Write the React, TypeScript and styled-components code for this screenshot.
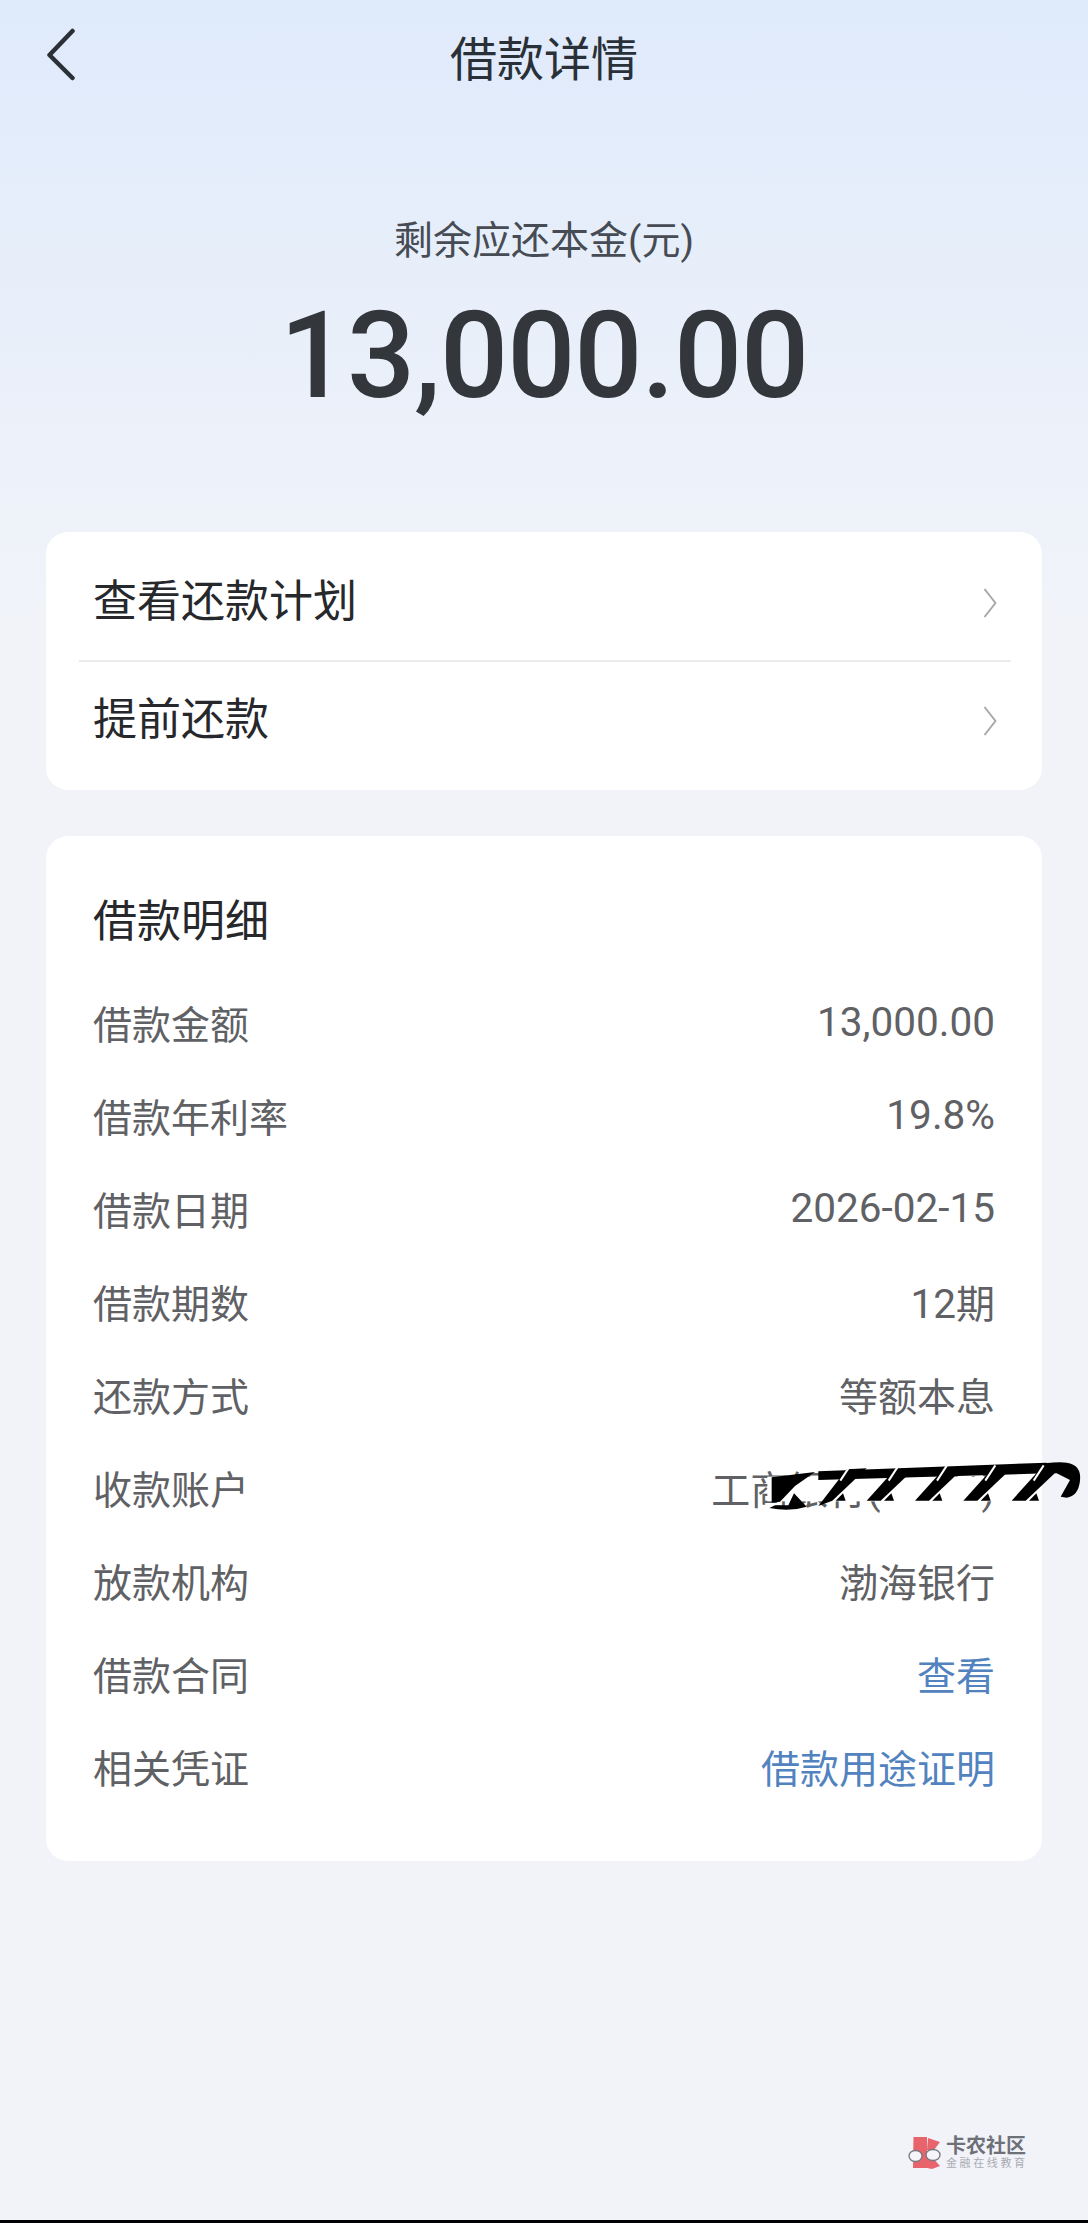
import * as React from "react";
import styled, { createGlobalStyle } from "styled-components";

const GlobalStyle = createGlobalStyle`
  html, body {
    margin: 0;
    padding: 0;
    background: #f1f3f9;
  }
`;

const FONT = `Roboto, "Noto Sans CJK SC", sans-serif`;

const Page = styled.div`
  position: relative;
  width: 1088px;
  height: 2223px;
  overflow: hidden;
  display: flex;
  flex-direction: column;
  font-family: ${FONT};
  background: linear-gradient(180deg, #dfeafb 0, #e8effa 300px, #f1f3f9 620px, #f1f3f9 100%);
`;

const Header = styled.div`
  height: 111px;
  display: flex;
  align-items: center;
  justify-content: center;
  position: relative;
`;

const BackButton = styled.div`
  position: absolute;
  left: 44px;
  top: 28px;
  width: 32px;
  height: 54px;
`;

const Title = styled.div`
  font-size: 47px;
  color: #2a3038;
  font-weight: 400;
`;

const Summary = styled.div`
  margin-top: 105px;
  display: flex;
  flex-direction: column;
  align-items: center;
`;

const SummaryLabel = styled.div`
  font-size: 39px;
  line-height: 50px;
  color: #474c54;
`;

const SummaryAmount = styled.div`
  margin-top: 20px;
  font-size: 120px;
  line-height: 140px;
  font-weight: 500;
  color: #33363b;
  letter-spacing: -1px;
`;

const Card = styled.div`
  margin: 0 46px;
  background: #ffffff;
  border-radius: 22px;
  box-sizing: border-box;
`;

const ActionCard = styled(Card)`
  margin-top: 106px;
  height: 258px;
  padding: 0 31px 0 33px;
`;

const ActionRow = styled.div<{ $first?: boolean }>`
  box-sizing: border-box;
  display: flex;
  align-items: center;
  justify-content: space-between;
  font-size: 44px;
  color: #26282c;
  height: ${({ $first }) => ($first ? "130px" : "128px")};
  padding: ${({ $first }) => ($first ? "4px 14px 0 14px" : "0 14px 20px 14px")};
  ${({ $first }) => $first && "border-bottom: 2px solid #ececef;"}
`;

const ChevronIcon = styled.svg`
  width: 14px;
  height: 30px;
  margin-top: 10px;
`;

const DetailCard = styled(Card)`
  margin-top: 46px;
  height: 1025px;
  padding: 56px 47px 0 47px;
  position: relative;
`;

const DetailTitle = styled.div`
  font-size: 44px;
  line-height: 60px;
  color: #26282c;
  margin-bottom: 23px;
`;

const DetailRow = styled.div`
  height: 93px;
  display: flex;
  align-items: center;
  justify-content: space-between;
  font-size: 39px;
  color: #5f6165;
`;

const RowLabel = styled.span``;

const RowValue = styled.span<{ $link?: boolean }>`
  color: ${({ $link }) => ($link ? "#5283bf" : "#5f6165")};
`;

const Num = styled.span`
  font-size: 40.5px;
`;

const Scribble = styled.svg`
  position: absolute;
  left: 634px;
  top: 594px;
  width: 408px;
  height: 130px;
  overflow: visible;
`;

const Watermark = styled.div`
  position: absolute;
  left: 908px;
  top: 2135px;
  display: flex;
  align-items: center;
  gap: 1px;
`;

const WatermarkText = styled.div`
  display: flex;
  flex-direction: column;
  width: 80px;
`;

const WatermarkName = styled.div`
  font-size: 20px;
  line-height: 22px;
  font-weight: 700;
  color: #6e7078;
`;

const WatermarkSlogan = styled.div`
  font-size: 11px;
  line-height: 13px;
  letter-spacing: 2.6px;
  white-space: nowrap;
  color: #a9abb2;
`;

const BottomBar = styled.div`
  margin-top: auto;
  height: 3px;
  background: #000;
`;

const Chevron = () => (
  <ChevronIcon viewBox="0 0 14 30" fill="none">
    <path d="M1.5 1 L12.5 15 L1.5 29" stroke="#a8a8ac" strokeWidth="2" strokeLinejoin="round" />
  </ChevronIcon>
);

const details: { label: string; value: React.ReactNode; link?: boolean }[] = [
  { label: "借款金额", value: <Num>13,000.00</Num> },
  { label: "借款年利率", value: <Num>19.8%</Num> },
  { label: "借款日期", value: <Num>2026-02-15</Num> },
  { label: "借款期数", value: <><Num>12</Num>期</> },
  { label: "还款方式", value: "等额本息" },
  { label: "收款账户", value: "工商银行(******)" },
  { label: "放款机构", value: "渤海银行" },
  { label: "借款合同", value: "查看", link: true },
  { label: "相关凭证", value: "借款用途证明", link: true },
];

// strokes of the pen scribble that hides the account number
const scribbleUnits = [415, 560, 705, 850, 995];

const App = () => (
  <Page>
    <GlobalStyle />
    <Header>
      <BackButton>
        <svg width="32" height="54" viewBox="0 0 32 54" fill="none">
          <path d="M28.5 3 L5.5 27 L28.5 50" stroke="#2b3036" strokeWidth="4.5" strokeLinecap="round" strokeLinejoin="round" />
        </svg>
      </BackButton>
      <Title>借款详情</Title>
    </Header>
    <Summary>
      <SummaryLabel>剩余应还本金(元)</SummaryLabel>
      <SummaryAmount>13,000.00</SummaryAmount>
    </Summary>
    <ActionCard>
      <ActionRow $first>
        查看还款计划
        <Chevron />
      </ActionRow>
      <ActionRow>
        提前还款
        <Chevron />
      </ActionRow>
    </ActionCard>
    <DetailCard>
      <DetailTitle>借款明细</DetailTitle>
      {details.map((d) => (
        <DetailRow key={d.label}>
          <RowLabel>{d.label}</RowLabel>
          <RowValue $link={d.link}>{d.value}</RowValue>
        </DetailRow>
      ))}
      <Scribble viewBox="0 0 1224 390">
        <rect x="262" y="140" width="720" height="74" fill="#ffffff" />
        <path fill="#000" d="M275 142 L405 126 L345 168 L300 215 L275 218 Z" />
        <path fill="#000" d="M342 190 L380 230 Q330 246 268 234 L285 226 L325 226 Z" />
        <path fill="#000" d="M415 124 L1100 98 L1100 130 L415 150 Z" />
        {scribbleUnits.map((x) => (
          <g key={x}>
            <path fill="#000" d={`M${x} ${x === 415 ? 228 : 212} L${x + 85} 118 L${x + 145} 115 L${x + 42} 212 Z`} />
            <path fill="#000" d={`M${x + 52} 212 L${x + 74} 190 L${x + 82} 212 Z`} />
            <path stroke="#fff" strokeWidth="6" d={`M${x + 96} 106 L${x + 66} 152`} />
          </g>
        ))}
        <path fill="#000" d="M1095 100 Q1140 94 1160 98 Q1205 104 1200 152 Q1195 198 1160 203 L1142 200 L1170 150 L1130 130 L1095 130 Z" />
      </Scribble>
    </DetailCard>
    <Watermark>
      <svg width="37" height="34" viewBox="0 0 37 34">
        <path d="M5.5 1 L19 1 L19 32 L5 32 Z" fill="#e8646c" />
        <path d="M20 2 L32 6 L26 14 L19 14 Z" fill="#e8646c" />
        <path d="M18 19 L24 21 L32 30 L24 33 L19 32 Z" fill="#e8646c" />
        <ellipse cx="7.5" cy="20" rx="6.5" ry="5.5" fill="#f6f6fa" stroke="#77777d" strokeWidth="1.3" />
        <ellipse cx="25" cy="19" rx="7" ry="5.5" fill="#f6f6fa" stroke="#77777d" strokeWidth="1.3" />
      </svg>
      <WatermarkText>
        <WatermarkName>卡农社区</WatermarkName>
        <WatermarkSlogan>金融在线教育</WatermarkSlogan>
      </WatermarkText>
    </Watermark>
    <BottomBar />
  </Page>
);

export default App;
